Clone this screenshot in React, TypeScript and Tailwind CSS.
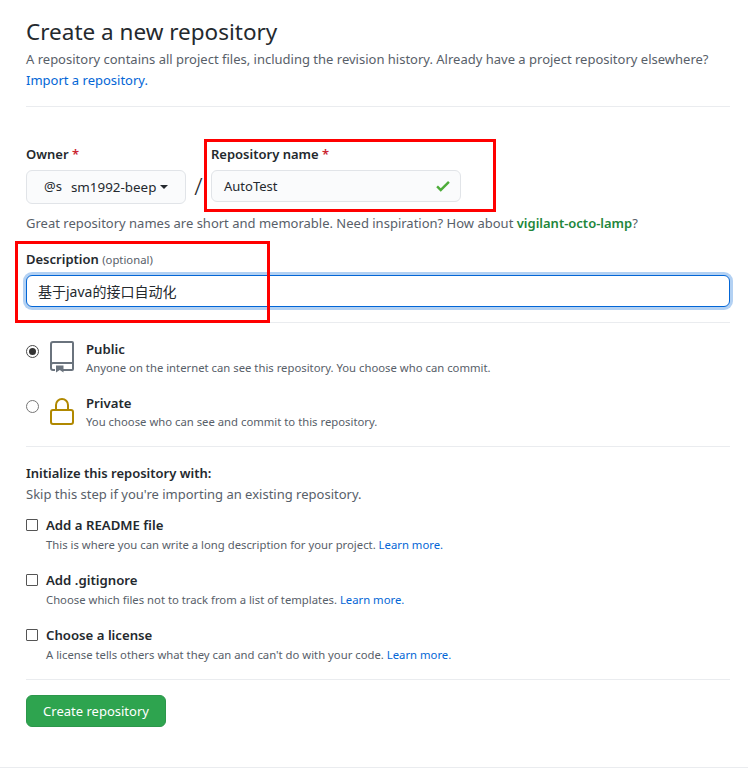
const Req = () => <span className="text-[#cb2431]"> *</span>;

function Option({ title, desc }: { title: string; desc: string }) {
  return (
    <div className="flex items-start h-[55px]">
      <span className="mt-[4px] w-[12px] h-[12px] border border-[#555] rounded-[1px] bg-white shrink-0" />
      <div className="ml-[8px]">
        <div className="text-[13.2px] leading-[21px] font-semibold text-[#24292e]">{title}</div>
        <div className="text-[11.3px] leading-[18px] text-[#586069]">
          {desc} <span className="text-[#0366d6]">Learn more.</span>
        </div>
      </div>
    </div>
  );
}

export default function App() {
  return (
    <div className="relative w-[748px] h-[768px] bg-white overflow-hidden font-['Noto_Sans','Noto_Sans_CJK_SC',sans-serif] text-[#24292e]">
      <div className="ml-[26px] w-[704px] pt-[14px]">
        <h1 className="text-[22.5px] leading-[36px] font-normal">Create a new repository</h1>
        <p className="mt-[-1px] text-[13px] leading-[21px] text-[#586069]">
          A repository contains all project files, including the revision history. Already have a project repository elsewhere?
          <br />
          <span className="text-[#0366d6]">Import a repository.</span>
        </p>
        <div className="mt-[15px] h-px bg-[#eaecef]" />

        <div className="mt-[37px] flex items-start">
          <div>
            <div className="text-[13px] leading-[21px] font-semibold">Owner<Req /></div>
            <div className="mt-[5px] w-[160px] h-[34px] rounded-[6px] border border-[#e1e4e8] bg-[#fafbfc] flex items-center pl-[17px] text-[13px]">
              <span>@s</span>
              <span className="ml-[9px] text-[13.4px]">sm1992-beep</span>
              <span className="ml-[4px] w-0 h-0 border-x-[4px] border-x-transparent border-t-[4px] border-t-[#24292e]" />
            </div>
          </div>
          <div className="mt-[24px] w-[25px] text-center text-[24px] leading-[36px] font-light">/</div>
          <div>
            <div className="text-[13px] leading-[21px] font-semibold">Repository name<Req /></div>
            <div className="mt-[5px] w-[250px] h-[32px] rounded-[6px] border border-[#e1e4e8] bg-[#fafbfc] flex items-center justify-between pl-[12px] pr-[8px] text-[13px]">
              <span className="pt-[2px]">AutoTest</span>
              <svg viewBox="0 0 12 16" className="w-[18px] h-[18px]" fill="#4dac39">
                <path fillRule="evenodd" d="M12 5l-8 8-4-4 1.5-1.5L4 10l6.5-6.5L12 5z" />
              </svg>
            </div>
          </div>
        </div>

        <p className="mt-[9px] text-[13px] leading-[21px] text-[#586069]">
          Great repository names are short and memorable. Need inspiration? How about <span className="font-semibold text-[#22863a]">vigilant-octo-lamp</span>?
        </p>

        <div className="mt-[15px] text-[13px] leading-[21px] font-semibold">
          Description <span className="text-[11.3px] font-normal text-[#586069]">(optional)</span>
        </div>
        <div className="mt-[5px] h-[32px] rounded-[6px] border border-[#0366d6] shadow-[0_0_0_3px_rgba(3,102,214,0.3)] bg-white flex items-center pl-[11px] text-[14px]">
          基于java的接口自动化
        </div>
        <div className="mt-[15px] h-px bg-[#eaecef]" />

        <div className="mt-[16px] flex items-start h-[54px]">
          <span className="mt-[6px] w-[13px] h-[13px] rounded-full border border-[#4a4a4a] flex items-center justify-center shrink-0">
            <span className="w-[7px] h-[7px] rounded-full bg-[#333]" />
          </span>
          <svg viewBox="0 0 24 32" className="ml-[11px] mt-[2px] w-[24px] h-[32px] shrink-0" fill="none" stroke="#6a737d" strokeWidth="2">
            <path d="M5 29H3a2 2 0 0 1-2-2V3a2 2 0 0 1 2-2h19a1 1 0 0 1 1 1v26a1 1 0 0 1-1 1h-9" />
            <path d="M1 24a2 2 0 0 1 2-2h20" />
            <path d="M6 24.5h7.5v7l-3.75-2.5L6 31.5z" fill="#6a737d" stroke="none" />
          </svg>
          <div className="ml-[12px]">
            <div className="text-[13.2px] leading-[20px] font-semibold">Public</div>
            <div className="text-[11.3px] leading-[18px] text-[#586069]">Anyone on the internet can see this repository. You choose who can commit.</div>
          </div>
        </div>

        <div className="flex items-start h-[46px]">
          <span className="mt-[7px] w-[13px] h-[13px] rounded-full border border-[#767676] bg-white shrink-0" />
          <svg viewBox="0 0 24 32" className="ml-[11px] w-[24px] h-[32px] shrink-0" fill="none" stroke="#b08800" strokeWidth="2">
            <path d="M6 17v-5a6 6 0 0 1 12 0v5" />
            <rect x="1" y="17" width="22" height="14" rx="2" />
          </svg>
          <div className="ml-[12px]">
            <div className="text-[13.2px] leading-[20px] font-semibold">Private</div>
            <div className="text-[11.3px] leading-[18px] text-[#586069]">You choose who can see and commit to this repository.</div>
          </div>
        </div>

        <div className="mt-[7px] h-px bg-[#eaecef]" />

        <div className="mt-[16px] text-[13px] leading-[21px] font-semibold">Initialize this repository with:</div>
        <div className="text-[13px] leading-[21px] text-[#586069]">Skip this step if you're importing an existing repository.</div>

        <div className="mt-[10px]">
          <Option title="Add a README file" desc="This is where you can write a long description for your project." />
          <Option title="Add .gitignore" desc="Choose which files not to track from a list of templates." />
          <Option title="Choose a license" desc="A license tells others what they can and can't do with your code." />
        </div>

        <div className="mt-[-1px] h-px bg-[#eaecef]" />
        <div className="mt-[15px] w-[140px] h-[32px] rounded-[6px] bg-[#2ea44f] border border-[#2c974b] text-white text-[13px] flex items-center justify-center">
          <span className="pt-[1px]">Create repository</span>
        </div>
      </div>

      <div className="absolute left-0 right-0 top-[767px] h-px bg-[#eaecef]" />
      <div className="absolute left-[204px] top-[139px] w-[292px] h-[73px] border-[3px] border-[#ff0000]" />
      <div className="absolute left-[15px] top-[241px] w-[255px] h-[82px] border-[3px] border-[#ff0000]" />
    </div>
  );
}
